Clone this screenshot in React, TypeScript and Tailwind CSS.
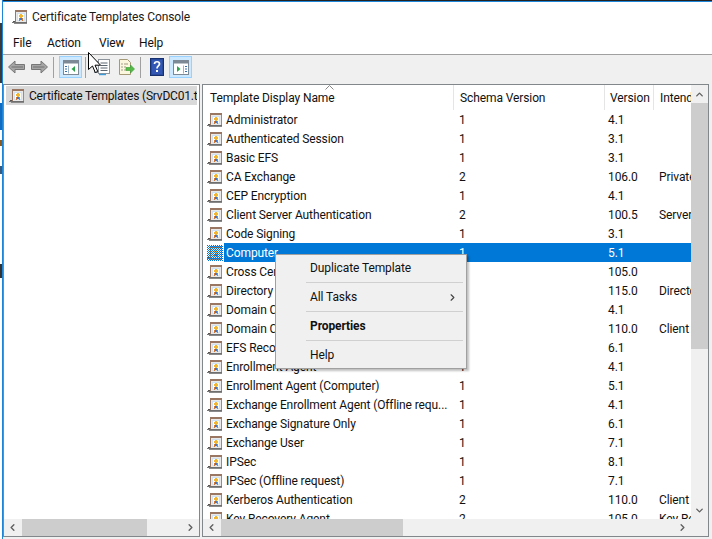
import React from "react";
import { ChevronLeft, ChevronRight, ChevronUp, ChevronDown } from "lucide-react";

const rows: [string, string, string, string][] = [
  ["Administrator", "1", "4.1", ""],
  ["Authenticated Session", "1", "3.1", ""],
  ["Basic EFS", "1", "3.1", ""],
  ["CA Exchange", "2", "106.0", "Private Key Archival"],
  ["CEP Encryption", "1", "4.1", ""],
  ["Client Server Authentication", "2", "100.5", "Server Authentication"],
  ["Code Signing", "1", "3.1", ""],
  ["Computer", "1", "5.1", ""],
  ["Cross Certification Authority", "2", "105.0", ""],
  ["Directory Email Replication", "2", "115.0", "Directory Service"],
  ["Domain Controller", "1", "4.1", ""],
  ["Domain Controller Authentication", "2", "110.0", "Client Authentication"],
  ["EFS Recovery Agent", "1", "6.1", ""],
  ["Enrollment Agent", "1", "4.1", ""],
  ["Enrollment Agent (Computer)", "1", "5.1", ""],
  ["Exchange Enrollment Agent (Offline requ...", "1", "4.1", ""],
  ["Exchange Signature Only", "1", "6.1", ""],
  ["Exchange User", "1", "7.1", ""],
  ["IPSec", "1", "8.1", ""],
  ["IPSec (Offline request)", "1", "7.1", ""],
  ["Kerberos Authentication", "2", "110.0", "Client Authentication"],
  ["Key Recovery Agent", "2", "105.0", "Key Recovery Agent"],
];

const CertIcon = ({ selected = false }: { selected?: boolean }) => (
  <svg width="16" height="16" viewBox="0 0 16 16" className="shrink-0" shapeRendering="crispEdges">
    <defs>
      <pattern id="dither" width="2" height="2" patternUnits="userSpaceOnUse">
        <rect x="0" y="0" width="1" height="1" fill="#0078d7" />
        <rect x="1" y="1" width="1" height="1" fill="#0078d7" />
      </pattern>
    </defs>
    <rect x="0" y="13" width="3" height="1" fill="#777" />
    <rect x="1" y="12" width="2" height="1" fill="#555" />
    <rect x="2" y="14" width="13" height="1" fill="#8a8a8a" />
    <rect x="3" y="1" width="12" height="13" fill="#e9e9e9" />
    <rect x="3" y="1" width="12" height="2" fill="#9a7763" />
    <rect x="3" y="1" width="1" height="13" fill="#9a7763" />
    <rect x="14" y="3" width="1" height="11" fill="#8f8f8f" />
    <rect x="3" y="13" width="12" height="1" fill="#6f6f6f" />
    <rect x="5" y="4" width="8" height="8" fill="#cfe0f2" />
    <rect x="6" y="5" width="6" height="6" fill="#fdfdfd" />
    <rect x="8" y="5" width="2" height="4" fill="#f3b62e" />
    <rect x="7" y="6" width="4" height="2" fill="#f3b62e" />
    <rect x="7" y="9" width="1" height="3" fill="#d9762b" />
    <rect x="8" y="9" width="2" height="2" fill="#3f78c8" />
    <rect x="10" y="9" width="1" height="3" fill="#d9762b" />
    {selected && <rect x="0" y="0" width="16" height="16" fill="url(#dither)" />}
  </svg>
);

const ArrowBtn = ({ flip = false }: { flip?: boolean }) => (
  <svg width="17" height="14" viewBox="0 0 17 14" className={flip ? "-scale-x-100" : ""}>
    <path d="M0.500 7 7 1v3.500h9.500v5H7V13z" fill="#a5a5a5" stroke="#777" />
    <path d="M3.500 7H15" stroke="#8a8a8a" strokeWidth="2" />
  </svg>
);

const PaneIcon = ({ right = false }: { right?: boolean }) => (
  <svg width="16" height="15" viewBox="0 0 16 15">
    <rect x="0.500" y="0.500" width="15" height="14" fill="#fff" stroke="#7d8a96" />
    <rect x="1" y="1" width="14" height="2.500" fill="#7d8a96" />
    {right ? (
      <>
        <path d="M4 6v6l3.500-3z" fill="#2da44a" />
        <path d="M10.500 5.500v8" stroke="#9fb2c4" />
        <path d="M12 6.500h2M12 9h2M12 11.500h2" stroke="#2f6fb5" strokeWidth="1.200" />
      </>
    ) : (
      <>
        <path d="M2 6.500h2M2 9h2M2 11.500h2" stroke="#2f6fb5" strokeWidth="1.200" />
        <path d="M5.500 5.500v8" stroke="#9fb2c4" />
        <path d="M12 6v6l-3.500-3z" fill="#2da44a" />
      </>
    )}
  </svg>
);

const PropsIcon = () => (
  <svg width="17" height="17" viewBox="0 0 17 17">
    <rect x="0.500" y="2.500" width="13" height="11" fill="#eef1f4" stroke="#8d949b" />
    <rect x="4.500" y="0.500" width="11" height="14" fill="#fff" stroke="#8d949b" />
    <path d="M6.500 4h7M6.500 6.500h7M6.500 9h7M6.500 11.500h7" stroke="#5b6670" />
    <path d="M5 15.500h7" stroke="#3d9ad8" strokeWidth="1.400" />
  </svg>
);

const ExportIcon = () => (
  <svg width="17" height="17" viewBox="0 0 17 17">
    <path d="M1.500 0.500h8l3 3v12h-11z" fill="#fbf6de" stroke="#a49a78" />
    <path d="M3.500 5h1M3.500 8h1M3.500 11h1" stroke="#444" />
    <path d="M6 5h4M6 8h2M6 11h2" stroke="#a09a80" />
    <path d="M8 8.500h4.500V6l4 4-4 4v-2.500H8z" fill="#55b948" stroke="#3b9a34" strokeWidth="0.600" />
  </svg>
);

const HelpIcon = () => (
  <svg width="14" height="18" viewBox="0 0 14 18">
    <rect width="14" height="18" fill="#2a4a9c" />
    <rect x="0.500" y="0.500" width="13" height="17" fill="none" stroke="#17306f" />
    <rect x="2" y="2" width="10" height="14" fill="#3257b4" />
    <path d="M4.500 6c0-3 5-3 5 0 0 2-2.500 2-2.500 4.500" fill="none" stroke="#fff" strokeWidth="1.700" />
    <rect x="6" y="12" width="2" height="2" fill="#fff" />
  </svg>
);

const ToolSep = () => <div className="w-px h-[21px] bg-[#a0a0a0]" />;

const HScroll = ({ thumb, before }: { thumb: string; before: string }) => (
  <div className="h-[17px] bg-[#f0f0f0] flex items-center shrink-0">
    <div className="w-[17px] shrink-0 flex justify-center">
      <ChevronLeft size={11} strokeWidth={3} color="#606060" />
    </div>
    <div className="flex-1 h-full flex min-w-0">
      <div className={before} />
      <div className={`h-full bg-[#cdcdcd] ${thumb}`} />
      <div className="flex-1" />
    </div>
    <div className="w-[17px] shrink-0 flex justify-center">
      <ChevronRight size={11} strokeWidth={3} color="#606060" />
    </div>
  </div>
);

const MenuSep = () => <div className="h-px bg-[#d0d0d0] ml-[30px] mr-[3px] my-[3px]" />;

const App: React.FC = () => {
  return (
    <div
      className="relative w-[712px] h-[539px] overflow-hidden bg-white flex text-[12px] tracking-[-0.1px] text-[#111]"
      style={{ fontFamily: 'Roboto, "Liberation Sans", sans-serif' }}
    >
      {/* desktop behind the window */}
      <div className="w-[2px] h-full flex flex-col shrink-0 bg-white">
        <div className="h-[23px]" />
        <div className="h-[60px] bg-[#3a3a3a]" />
        <div className="h-[20px]" />
        <div className="h-[27px] bg-[#0f6cc0]" />
        <div className="h-[10px]" />
        <div className="h-[6px] bg-[#8a5a20]" />
        <div className="h-[20px]" />
        <div className="h-[8px] bg-[#3a5a7c]" />
        <div className="h-[90px]" />
        <div className="h-[14px] bg-[#333]" />
      </div>
      <div className="flex-1 min-w-0 border-l border-[#1e86d8] flex flex-col">
        <div className="h-px bg-[#222] shrink-0" />
        <div className="h-px bg-[#1e86d8] shrink-0" />
        <div className="h-[31px] bg-white flex items-center pl-[9px] pb-[2px] gap-[4px] shrink-0 text-[#1a1a1a]">
          <CertIcon />
          <span className="leading-none">Certificate Templates Console</span>
        </div>
        <div className="h-[21px] bg-white flex items-center pl-[10px] pb-px shrink-0">
          <span className="w-[34px]">File</span>
          <span className="w-[52px]">Action</span>
          <span className="w-[40px]">View</span>
          <span>Help</span>
        </div>
        <div className="h-px bg-[#a0a0a0] shrink-0" />
        <div className="h-[24px] bg-[#f0f0f0] flex items-center pl-[5px] shrink-0">
          <ArrowBtn />
          <div className="w-[6px]" />
          <ArrowBtn flip />
          <div className="w-[5px]" />
          <ToolSep />
          <div className="w-[5px]" />
          <div className="w-[23px] h-[22px] bg-[#cce8ff] border border-[#99d1ff] flex items-center justify-center">
            <PaneIcon />
          </div>
          <div className="w-[3px]" />
          <ToolSep />
          <div className="w-[8px]" />
          <PropsIcon />
          <div className="w-[7px]" />
          <ExportIcon />
          <div className="w-[5px]" />
          <ToolSep />
          <div className="w-[9px]" />
          <HelpIcon />
          <div className="w-[5px]" />
          <div className="w-[23px] h-[22px] bg-[#cce8ff] border border-[#99d1ff] flex items-center justify-center">
            <PaneIcon right />
          </div>
        </div>
        <div className="flex-1 min-h-0 bg-[#f0f0f0] flex gap-[2px] pt-[5px] pb-[2px] pr-[3px]">
          {/* tree pane */}
          <div className="w-[197px] shrink-0 bg-white border border-[#82878c] flex flex-col">
            <div className="flex-1 min-h-0 pt-[1px] pl-[2px] pr-[2px]">
              <div className="h-[19px] bg-[#d9d9d9] flex items-center gap-[4px] pl-[3px] overflow-hidden whitespace-nowrap tracking-[-0.2px]">
                <CertIcon />
                <span>Certificate Templates (SrvDC01.tlab.local)</span>
              </div>
            </div>
            <HScroll before="w-[1px]" thumb="w-[125px]" />
          </div>
          {/* details pane */}
          <div className="flex-1 min-w-0 bg-white border border-[#82878c] flex flex-col">
            <div className="flex-1 min-h-0 flex">
              <div className="flex-1 min-w-0 flex flex-col overflow-hidden">
                <div className="h-[25px] shrink-0 flex items-center relative whitespace-nowrap">
                  <div className="w-[251px] shrink-0 pl-[7px] h-full flex items-center border-r border-[#e5e5e5] relative">
                    Template Display Name
                    <svg width="9" height="5" viewBox="0 0 9 5" className="absolute left-[122px] top-0">
                      <path d="M0.500 4.500 4.500 0.500l4 4" fill="none" stroke="#888" />
                    </svg>
                  </div>
                  <div className="w-[151px] shrink-0 pl-[6px] h-full flex items-center border-r border-[#e5e5e5]">
                    Schema Version
                  </div>
                  <div className="w-[49px] shrink-0 pl-[5px] h-full flex items-center border-r border-[#e5e5e5]">
                    Version
                  </div>
                  <div className="flex-1 min-w-0 pl-[6px] overflow-hidden">Intended Purposes</div>
                </div>
                {rows.map((r) => {
                  const sel = r[0] === "Computer";
                  return (
                    <div key={r[0]} className="h-[19px] shrink-0 flex items-center whitespace-nowrap">
                      <div className="w-[21px] shrink-0 pl-[4px] flex items-center">
                        <CertIcon selected={sel} />
                      </div>
                      <div className={`flex-1 min-w-0 h-full flex items-center ${sel ? "bg-[#0078d7] text-white" : ""}`}>
                        <div className="w-[234px] shrink-0 pl-[2px] overflow-hidden">{r[0]}</div>
                        <div className="w-[150px] shrink-0 pl-[1px]">{r[1]}</div>
                        <div className="w-[50px] shrink-0">{r[2]}</div>
                        <div className="flex-1 min-w-0 pl-[1px] overflow-hidden">{r[3]}</div>
                      </div>
                    </div>
                  );
                })}
              </div>
              <div className="w-[17px] shrink-0 bg-[#f0f0f0] flex flex-col">
                <div className="h-[18px] flex items-center justify-center shrink-0">
                  <ChevronUp size={11} strokeWidth={3} color="#606060" />
                </div>
                <div className="h-[246px] bg-[#cdcdcd] shrink-0" />
                <div className="flex-1" />
                <div className="h-[17px] flex items-center justify-center shrink-0">
                  <ChevronDown size={11} strokeWidth={3} color="#606060" />
                </div>
              </div>
            </div>
            <div className="flex shrink-0">
              <div className="flex-1 min-w-0">
                <HScroll before="w-[1px]" thumb="w-[182px]" />
              </div>
              <div className="w-[17px] bg-[#f0f0f0]" />
            </div>
          </div>
        </div>
      </div>

      {/* context menu */}
      <div className="absolute left-[275px] top-[254px] w-[192px] bg-[#f0f0f0] border border-[#a0a0a0] shadow-[2px_2px_2px_rgba(0,0,0,0.25)] py-[2px] text-[#111]">
        <div className="h-[22px] pl-[34px] flex items-center">Duplicate Template</div>
        <MenuSep />
        <div className="h-[22px] pl-[34px] pr-[8px] flex items-center justify-between">
          All Tasks
          <ChevronRight size={11} strokeWidth={2.500} color="#444" />
        </div>
        <MenuSep />
        <div className="h-[22px] pl-[34px] flex items-center font-bold">Properties</div>
        <MenuSep />
        <div className="h-[22px] pl-[34px] flex items-center">Help</div>
      </div>

      {/* mouse pointer */}
      <svg width="14" height="22" viewBox="0 0 14 22" className="absolute left-[88px] top-[52px]">
        <path d="M0.500 0.500v17l4-3.500 2.800 6.500 2.500-1-2.800-6.300h5.500z" fill="#fff" stroke="#000" />
      </svg>
    </div>
  );
};

export default App;
